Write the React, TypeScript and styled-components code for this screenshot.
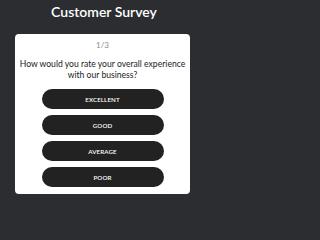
import React from "react";
import styled, { createGlobalStyle } from "styled-components";

const GlobalStyle = createGlobalStyle`
  html, body {
    margin: 0;
    padding: 0;
    background: #2c2d31;
  }
  body {
    font-family: "Lato", "Open Sans", sans-serif;
  }
`;

const Page = styled.div`
  width: 208px;
  height: 203px;
  background: #2c2d31;
  overflow: hidden;
`;

const Title = styled.h1`
  margin: 0;
  padding-top: 3px;
  height: 34px;
  box-sizing: border-box;
  font-family: "Lato", sans-serif;
  font-size: 14px;
  line-height: 18px;
  font-weight: 600;
  color: #ffffff;
  text-align: center;
`;

const Card = styled.div`
  margin-left: 15px;
  width: 175px;
  box-sizing: border-box;
  padding: 6px 0 7px;
  background: #ffffff;
  border-radius: 4px;
  display: flex;
  flex-direction: column;
  align-items: center;
`;

const Counter = styled.div`
  font-size: 8px;
  line-height: 10px;
  color: #8a8a8a;
`;

const Question = styled.p`
  margin: 9px 0 8px;
  font-size: 8.6px;
  line-height: 11px;
  white-space: nowrap;
  color: #222222;
  text-align: center;
`;

const Options = styled.div`
  display: flex;
  flex-direction: column;
  gap: 6px;
`;

const Option = styled.button`
  width: 122px;
  height: 20px;
  border: none;
  border-radius: 10px;
  background: #222222;
  color: #ffffff;
  font-family: "Lato", sans-serif;
  font-size: 6.2px;
  font-weight: 600;
  letter-spacing: 0.1px;
  padding: 0;
  cursor: pointer;
`;

const choices = ["EXCELLENT", "GOOD", "AVERAGE", "POOR"];

const App = () => {
  return (
    <Page>
      <GlobalStyle />
      <Title>Customer Survey</Title>
      <Card>
        <Counter>1/3</Counter>
        <Question>
          How would you rate your overall experience
          <br />
          with our business?
        </Question>
        <Options>
          {choices.map((c) => (
            <Option key={c}>{c}</Option>
          ))}
        </Options>
      </Card>
    </Page>
  );
};

export default App;
